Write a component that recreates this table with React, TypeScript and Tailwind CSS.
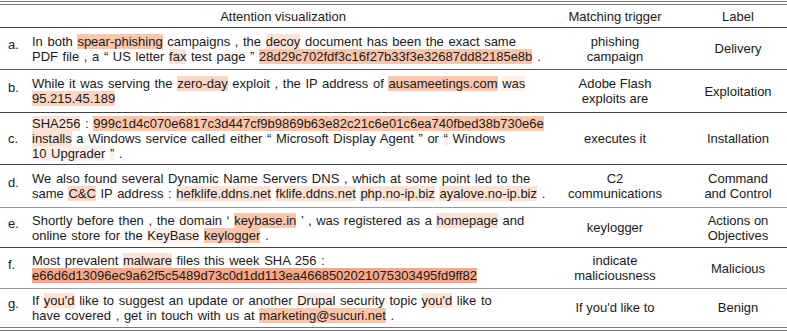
import type { ReactNode } from "react";

// highlight shades, strongest to faintest
const shade = {
	dark: "bg-[#f6a98a]",
	strong: "bg-[#fbc6ab]",
	mid: "bg-[#fcd6c2]",
	light: "bg-[#fde3d5]",
	faint: "bg-[#fef0e8]",
};

type Shade = keyof typeof shade;

function H({ c, children }: { c: Shade; children: ReactNode }) {
	return <span className={shade[c]}>{children}</span>;
}

type Row = {
	tag: string;
	h: string;
	lines: ReactNode[];
	trigger: string[];
	label: string[];
	rule: string;
};

const rows: Row[] = [
	{
		tag: "a.",
		h: "h-[42px]",
		lines: [
			<>
				In both <H c="strong">spear-phishing</H> campaigns , the <H c="light">decoy</H> document has
				been the exact same
			</>,
			<>
				PDF file , a “ US letter <H c="light">fax</H> test page ”{" "}
				<H c="strong">28d29c702fdf3c16f27b33f3e32687dd82185e8b</H> .
			</>,
		],
		trigger: ["phishing", "campaign"],
		label: ["Delivery"],
		rule: "border-[#555]",
	},
	{
		tag: "b.",
		h: "h-[43px]",
		lines: [
			<>
				While it was serving the <H c="mid">zero-day</H> exploit , the IP address of{" "}
				<H c="strong">ausameetings.com</H> <H c="faint">was</H>
			</>,
			<>
				<H c="mid">95.215.45.189</H>
			</>,
		],
		trigger: ["Adobe Flash", "exploits are"],
		label: ["Exploitation"],
		rule: "border-[#444]",
	},
	{
		tag: "c.",
		h: "h-[52px]",
		lines: [
			<>
				<H c="light">SHA256</H> :{" "}
				<H c="strong">999c1d4c070e6817c3d447cf9b9869b63e82c21c6e01c6ea740fbed38b730e6e</H>
			</>,
			<>
				<H c="light">installs</H> a Windows service called either “ Microsoft Display Agent ” or{" "}
				<H c="faint">“</H> Windows
			</>,
			<>
				<H c="faint">10 Upgrader</H> <H c="faint">”</H> .
			</>,
		],
		trigger: ["executes it"],
		label: ["Installation"],
		rule: "border-[#444]",
	},
	{
		tag: "d.",
		h: "h-[43px]",
		lines: [
			<>We also found several Dynamic Name Servers DNS , which at some point led to the</>,
			<>
				same <H c="mid">C&amp;C</H> IP address : <H c="light">hefklife.ddns.net</H>{" "}
				<H c="light">fklife.ddns.net</H> <H c="light">php.no-ip.biz</H>{" "}
				<H c="light">ayalove.no-ip.biz</H> .
			</>,
		],
		trigger: ["C2", "communications"],
		label: ["Command", "and Control"],
		rule: "border-[#999]",
	},
	{
		tag: "e.",
		h: "h-[40px]",
		lines: [
			<>
				Shortly before then , the domain ‘ <H c="strong">keybase.in</H> ’ , was registered as a{" "}
				<H c="light">homepage</H> and
			</>,
			<>
				online store for the <H c="faint">KeyBase</H> <H c="strong">keylogger</H> .
			</>,
		],
		trigger: ["keylogger"],
		label: ["Actions on", "Objectives"],
		rule: "border-[#444]",
	},
	{
		tag: "f.",
		h: "h-[41px]",
		lines: [
			<>
				Most prevalent <H c="light">malware</H> files this week SHA 256 :
			</>,
			<>
				<H c="dark">e66d6d13096ec9a62f5c5489d73c0d1dd113ea4668502021075303495fd9ff82</H>
			</>,
		],
		trigger: ["indicate", "maliciousness"],
		label: ["Malicious"],
		rule: "border-[#999]",
	},
	{
		tag: "g.",
		h: "h-[38px]",
		lines: [
			<>
				If <H c="light">you'd</H> like to suggest an update or another <H c="faint">Drupal</H> security
				topic <H c="light">you'd</H> like to
			</>,
			<>
				have covered , get in touch with us at <H c="strong">marketing@sucuri.net</H> .
			</>,
		],
		trigger: ["If you'd like to"],
		label: ["Benign"],
		rule: "border-transparent",
	},
];

const cols = "grid grid-cols-[25px_516px_148px_98px]";

export default function App() {
	return (
		<div
			className="w-[787px] h-[331px] bg-white text-[13px] leading-[15px] text-[#1a1a1a] overflow-hidden"
			style={{ fontFamily: '"Liberation Sans", Arial, sans-serif' }}
		>
			<div className="mt-px border-t border-[#777]" />
			<div className="mt-[2px] border-t border-[#777]" />
			<div className={`${cols} h-[23px] items-center border-b border-[#444]`}>
				<div />
				<div className="text-center">Attention visualization</div>
				<div className="text-center">Matching trigger</div>
				<div className="text-center">Label</div>
			</div>
			{rows.map((r) => (
				<div key={r.tag} className={`${cols} ${r.h} items-center border-b ${r.rule}`}>
					<div className={`pl-[8px] ${r.lines.length === 2 ? "mb-[8px]" : ""}`}>{r.tag}</div>
					<div className="flex flex-col whitespace-nowrap pl-[7px] [word-spacing:1px]">
						{r.lines.map((l, i) => (
							<div key={i}>{l}</div>
						))}
					</div>
					<div className="flex flex-col items-center text-center">
						{r.trigger.map((t) => (
							<div key={t}>{t}</div>
						))}
					</div>
					<div className="flex flex-col items-center text-center">
						{r.label.map((t) => (
							<div key={t}>{t}</div>
						))}
					</div>
				</div>
			))}
			<div className="border-t border-[#777]" />
			<div className="mt-[2px] border-t border-[#777]" />
		</div>
	);
}
